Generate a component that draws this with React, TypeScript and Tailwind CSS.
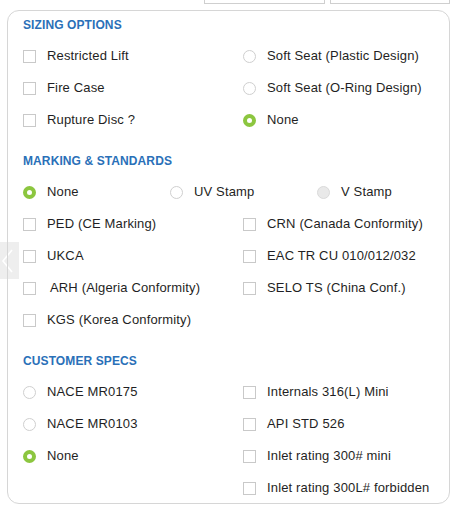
import React from 'react';

type Opt = { label: string; kind: 'check' | 'radio'; on?: boolean; disabled?: boolean; pad?: boolean };

function Box({ kind, on, disabled }: { kind: 'check' | 'radio'; on?: boolean; disabled?: boolean }) {
  if (kind === 'check') {
    return <span className="block w-[13px] h-[13px] shrink-0 border border-[#c9c9c9] bg-white" />;
  }
  if (on) {
    return <span className="block w-[13px] h-[13px] shrink-0 rounded-full border-[4px] border-[#8cc63f] bg-white" />;
  }
  if (disabled) {
    return <span className="block w-[13px] h-[13px] shrink-0 rounded-full border border-[#dadada] bg-[#e9e9e9]" />;
  }
  return <span className="block w-[13px] h-[13px] shrink-0 rounded-full border border-[#cfcfcf] bg-white" />;
}

function Row({ o }: { o: Opt }) {
  return (
    <div className="flex items-center h-8">
      <Box kind={o.kind} on={o.on} disabled={o.disabled} />
      <span className={`ml-[11px] whitespace-nowrap text-[13px] leading-4 tracking-[0.15px] text-[#1f1f24] ${o.pad ? 'pl-[3px]' : ''}`}>
        {o.label}
      </span>
    </div>
  );
}

function Heading({ children, className = '' }: { children: React.ReactNode; className?: string }) {
  return (
    <h3 className={`h-4 leading-4 text-[12px] font-bold tracking-[0.1px] text-[#2a70b8] ${className}`}>{children}</h3>
  );
}

const sizingLeft: Opt[] = [
  { label: 'Restricted Lift', kind: 'check' },
  { label: 'Fire Case', kind: 'check' },
  { label: 'Rupture Disc ?', kind: 'check' },
];
const sizingRight: Opt[] = [
  { label: 'Soft Seat (Plastic Design)', kind: 'radio' },
  { label: 'Soft Seat (O-Ring Design)', kind: 'radio' },
  { label: 'None', kind: 'radio', on: true },
];

const stamps: Opt[] = [
  { label: 'None', kind: 'radio', on: true },
  { label: 'UV Stamp', kind: 'radio' },
  { label: 'V Stamp', kind: 'radio', disabled: true },
];
const markLeft: Opt[] = [
  { label: 'PED (CE Marking)', kind: 'check' },
  { label: 'UKCA', kind: 'check' },
  { label: 'ARH (Algeria Conformity)', kind: 'check', pad: true },
  { label: 'KGS (Korea Conformity)', kind: 'check' },
];
const markRight: Opt[] = [
  { label: 'CRN (Canada Conformity)', kind: 'check' },
  { label: 'EAC TR CU 010/012/032', kind: 'check' },
  { label: 'SELO TS (China Conf.)', kind: 'check' },
];

const specLeft: Opt[] = [
  { label: 'NACE MR0175', kind: 'radio' },
  { label: 'NACE MR0103', kind: 'radio' },
  { label: 'None', kind: 'radio', on: true },
];
const specRight: Opt[] = [
  { label: 'Internals 316(L) Mini', kind: 'check' },
  { label: 'API STD 526', kind: 'check' },
  { label: 'Inlet rating 300# mini', kind: 'check' },
  { label: 'Inlet rating 300L# forbidden', kind: 'check' },
];

function TwoCols({ left, right }: { left: Opt[]; right: Opt[] }) {
  return (
    <div className="grid grid-cols-[220px_1fr]">
      <div>{left.map((o) => <Row key={o.label} o={o} />)}</div>
      <div>{right.map((o) => <Row key={o.label} o={o} />)}</div>
    </div>
  );
}

export default function App() {
  return (
    <div className="relative w-[455px] h-[509px] overflow-hidden bg-white" style={{ fontFamily: '"Liberation Sans", Arial, sans-serif' }}>
      {/* tabs peeking in from above */}
      <div className="flex justify-end gap-[5px] pr-[5px]">
        <div className="w-[121px] h-[4px] border-x border-b border-[#cfcfcf]" />
        <div className="w-[120px] h-[4px] border-x border-b border-[#cfcfcf]" />
      </div>

      {/* carousel arrow */}
      <div className="absolute left-0 top-[242px] w-[19px] h-[37px] bg-[#eeeeee] flex items-center">
        <svg width="14" height="26" viewBox="0 0 14 26" className="ml-[1px]">
          <path d="M11 2 L2 13 L11 24" fill="none" stroke="#ffffff" strokeWidth="1.6" />
        </svg>
      </div>

      <div className="relative ml-[7px] mt-[6px] w-[443px] h-[494px] rounded-[12px] border border-[#d6d6d6] pl-[15px] pt-[6px]">
        <Heading>SIZING OPTIONS</Heading>
        <div className="mt-[7px]">
          <TwoCols left={sizingLeft} right={sizingRight} />
        </div>

        <Heading className="mt-[17px]">MARKING &amp; STANDARDS</Heading>
        <div className="mt-[7px]">
          <div className="grid grid-cols-[147px_147px_1fr]">
            {stamps.map((o) => <Row key={o.label} o={o} />)}
          </div>
          <TwoCols left={markLeft} right={markRight} />
        </div>

        <Heading className="mt-[17px]">CUSTOMER SPECS</Heading>
        <div className="mt-[7px]">
          <TwoCols left={specLeft} right={specRight} />
        </div>
      </div>
    </div>
  );
}
